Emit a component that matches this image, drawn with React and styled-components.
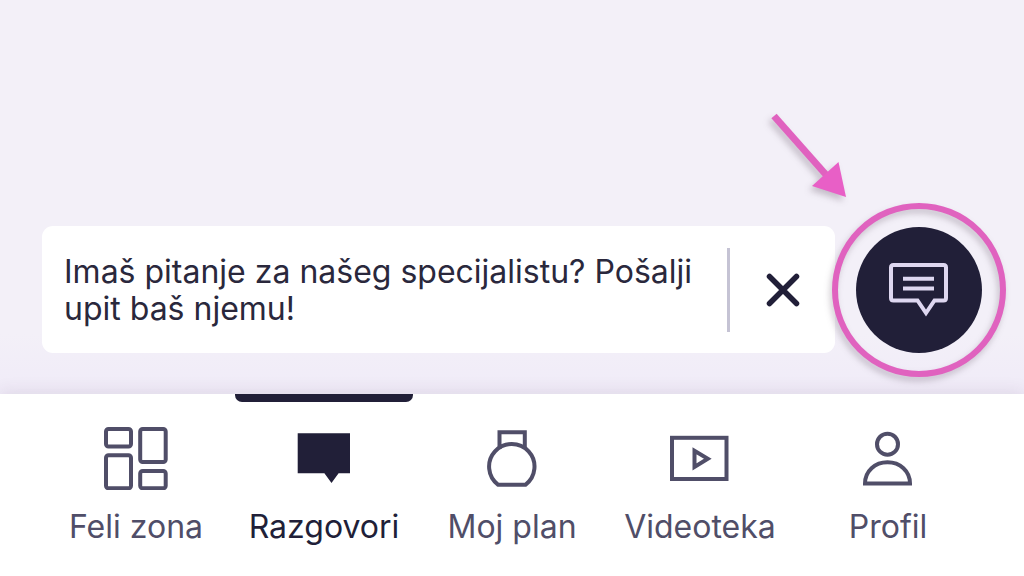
import React, { useState } from "react";
import styled, { createGlobalStyle } from "styled-components";

const tabs = [
  { id: "zona", label: "Feli zona" },
  { id: "razgovori", label: "Razgovori" },
  { id: "plan", label: "Moj plan" },
  { id: "videoteka", label: "Videoteka" },
  { id: "profil", label: "Profil" },
];

const TabIcon = ({ id }) => (
  <Icon viewBox="0 0 64 64" aria-hidden="true">
    {id === "zona" && (
      <>
        <rect x="2" y="3" width="25" height="17.5" rx="2.5" />
        <rect x="36.2" y="3" width="25.5" height="33" rx="2.5" />
        <rect x="2" y="29.2" width="25" height="33" rx="2.5" />
        <rect x="36.2" y="45" width="25.5" height="17.2" rx="2.5" />
      </>
    )}
    {id === "razgovori" && (
      <path
        d="M5.7 7.2H58V47.3H46.6L39.5 57L32.4 47.3H5.7Z"
        fill="currentColor"
        stroke="none"
      />
    )}
    {id === "plan" && (
      <>
        <path d="M18.2 58.8A22.7 22.7 0 1 1 45.4 58.8Z" />
        <path d="M19.5 23V6.2H44.8V23" />
      </>
    )}
    {id === "videoteka" && (
      <>
        <rect x="4" y="11.8" width="54.5" height="41.2" />
        <path d="M26.5 24.8V41L39.8 32.8Z" />
      </>
    )}
    {id === "profil" && (
      <>
        <circle cx="31.5" cy="18.2" r="10.5" />
        <path d="M9 57.6C9 45 19 36.3 31.5 36.3S54 45 54 57.6Z" />
      </>
    )}
  </Icon>
);

const App = () => {
  const [activeTab, setActiveTab] = useState("razgovori");
  const [showHint, setShowHint] = useState(true);

  return (
    <>
      <GlobalStyle />
      <Screen>
        <Conversations>
          <AskRow>
            {showHint && (
              <Hint>
                <HintText>
                  Imaš pitanje za našeg specijalistu? Pošalji upit baš njemu!
                </HintText>
                <Divider />
                <CloseBtn aria-label="Zatvori" onClick={() => setShowHint(false)}>
                  <svg width="36" height="36" viewBox="0 0 36 36">
                    <path
                      d="M4.5 4.5L31.5 31.5M31.5 4.5L4.5 31.5"
                      fill="none"
                      stroke="currentColor"
                      strokeWidth="5.5"
                      strokeLinecap="round"
                    />
                  </svg>
                </CloseBtn>
              </Hint>
            )}
            <AskWrap>
              <AskBtn aria-label="Novi upit">
                <Icon viewBox="0 0 64 64" aria-hidden="true">
                  <path d="M6.5 7H56.5Q59 7 59 9.5V40Q59 42.5 56.5 42.5H47.5L39 55L30.5 42.5H6.5Q4 42.5 4 40V9.5Q4 7 6.5 7Z" />
                  <path d="M16 20.7H47M16 30.5H47" />
                </Icon>
              </AskBtn>
              <Ring />
              <Arrow viewBox="0 0 80 88" aria-hidden="true">
                <path d="M6 7L60 68" fill="none" stroke="#e062bf" strokeWidth="7" />
                <path d="M78 88L44 77L70.5 53Z" fill="#e85fc6" />
              </Arrow>
            </AskWrap>
          </AskRow>
        </Conversations>

        <NavBar>
          {tabs.map((tab) => (
            <Tab
              key={tab.id}
              $active={tab.id === activeTab}
              aria-current={tab.id === activeTab ? "page" : undefined}
              onClick={() => setActiveTab(tab.id)}
            >
              <Indicator $active={tab.id === activeTab} />
              <TabIcon id={tab.id} />
              <TabLabel>{tab.label}</TabLabel>
            </Tab>
          ))}
        </NavBar>
      </Screen>
    </>
  );
};

export default App;

const GlobalStyle = createGlobalStyle`
  * {
    box-sizing: border-box;
  }

  body {
    margin: 0;
    background-color: #f3f0f8;
    font-family: Inter, "Liberation Sans", sans-serif;
  }

  button {
    padding: 0;
    border: none;
    background: none;
    font: inherit;
    cursor: pointer;
  }
`;

const Screen = styled.div`
  display: flex;
  flex-direction: column;
  min-height: 100vh;
`;

const Conversations = styled.main`
  flex: 1;
  display: flex;
  flex-direction: column;
  justify-content: flex-end;
  padding: 0 42px 41px;
  background: linear-gradient(to top, #f0ebf8, #f3f0f8 60px);
`;

const AskRow = styled.div`
  display: flex;
  align-items: center;
  justify-content: flex-end;
  gap: 21px;
`;

const Hint = styled.div`
  flex: 1;
  display: flex;
  align-items: center;
  min-height: 127px;
  padding-left: 22px;
  border-radius: 11px;
  background-color: #fff;
`;

const HintText = styled.p`
  flex: 1;
  margin: 0;
  color: #2a283c;
  font-size: 32px;
  line-height: 37px;
`;

const Divider = styled.span`
  width: 3px;
  height: 84px;
  margin-left: 12px;
  background-color: #c5c3d4;
`;

const CloseBtn = styled.button`
  display: flex;
  align-items: center;
  justify-content: center;
  width: 105px;
  height: 105px;
  color: #211f38;
`;

const AskWrap = styled.div`
  position: relative;
  flex: none;
`;

const AskBtn = styled.button`
  display: flex;
  align-items: center;
  justify-content: center;
  width: 126px;
  height: 126px;
  border-radius: 50%;
  color: #ded7f0;
  background-color: #211f38;
`;

const Icon = styled.svg`
  width: 64px;
  height: 64px;
  fill: none;
  stroke: currentColor;
  stroke-width: 4;
`;

const Ring = styled.span`
  position: absolute;
  inset: -24px;
  border: 6px solid #e062bf;
  border-radius: 50%;
  filter: drop-shadow(-2px 4px 3px rgba(60, 40, 60, 0.25));
  pointer-events: none;
`;

const Arrow = styled.svg`
  position: absolute;
  right: 134px;
  bottom: 156px;
  width: 80px;
  height: 88px;
  overflow: visible;
  filter: drop-shadow(-3px 4px 3px rgba(60, 40, 60, 0.25));
  pointer-events: none;
`;

const NavBar = styled.nav`
  display: grid;
  grid-template-columns: repeat(5, 1fr);
  padding: 0 42px 30px;
  background-color: #fff;
  box-shadow: 0 -2px 16px rgba(70, 40, 70, 0.1);
`;

const Tab = styled.button`
  display: flex;
  flex-direction: column;
  align-items: center;
  color: ${(props) => (props.$active ? "#211f38" : "#504e68")};
`;

const Indicator = styled.span`
  width: 178px;
  max-width: 100%;
  height: 8px;
  margin-bottom: 24px;
  border-radius: 0 0 7px 7px;
  background-color: ${(props) => (props.$active ? "#211f38" : "transparent")};
`;

const TabLabel = styled.span`
  margin-top: 18px;
  font-size: 32px;
  line-height: 38px;
  white-space: nowrap;
`;
